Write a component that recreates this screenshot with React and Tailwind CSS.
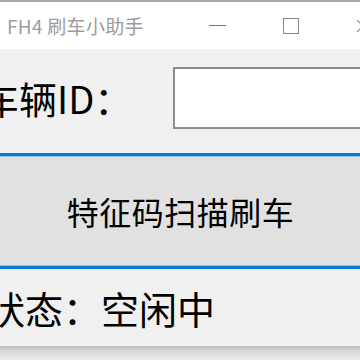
import { X } from 'lucide-react'

const FONT = "font-['Microsoft_YaHei','Noto_Sans_CJK_SC',sans-serif]"

export default function App() {
  return (
    <div className={`w-[360px] h-[360px] overflow-hidden flex flex-col bg-[#e6e6e6] ${FONT}`}>
      {/* 标题栏 */}
      <div className="h-[49px] shrink-0 border-t-2 border-[#a9a9a9] bg-white flex items-center">
        <span className="pl-[7px] text-[19px] leading-none text-[#9c9c9c] whitespace-nowrap tracking-[0.3px]">FH4 刷车小助手</span>
        <div className="ml-auto flex items-center">
          <div className="w-[17px] h-px bg-[#777] mr-[57px]" />
          <div className="w-[16px] h-[16px] border-[1.5px] border-[#888] mr-[53px]" />
          <X size={22} strokeWidth={1.2} className="text-[#888] mr-[-14px]" />
        </div>
      </div>

      {/* 内容区 */}
      <div className="h-[297px] shrink-0 bg-[#f0f0f0] flex flex-col">
        <div className="mt-[18px] flex items-center h-[62px]">
          <span className="ml-[-19px] w-[192px] shrink-0 text-[38px] leading-none text-black whitespace-nowrap">车辆ID：</span>
          <div className="w-[200px] shrink-0 h-[62px] bg-white border-2 border-[#8c8c8c]" />
        </div>

        <button className="mt-[24px] mx-[-4px] h-[116px] shrink-0 bg-[#e1e1e1] border-[3px] border-[#0a78d7] outline outline-1 outline-[#8cc4f0] -outline-offset-[4px] flex items-center justify-center">
          <span className="text-[32px] leading-none text-black pl-[1px] tracking-[0.5px]">特征码扫描刷车</span>
        </button>

        <div className="flex-1 flex items-center">
          <span className="ml-[-13px] text-[38px] leading-none text-black whitespace-nowrap">状态：空闲中</span>
        </div>
      </div>

      {/* 窗口阴影 */}
      <div className="flex-1 bg-gradient-to-b from-[#bdbdbd] via-[#dedede] to-[#ececec]" />
    </div>
  )
}
